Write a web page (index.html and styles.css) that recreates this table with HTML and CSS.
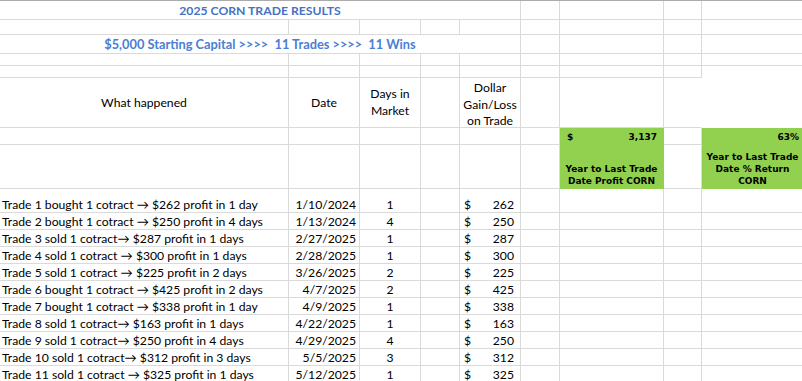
FILE: index.html
```html
<!DOCTYPE html>
<html>
<head>
<meta charset="utf-8">
<link rel="stylesheet" href="styles.css">
</head>
<body>
<div class="sheet">
  <!-- row 1 -->
  <div class="c title span5">2025 CORN TRADE RESULTS</div>
  <div class="c"></div><div class="c"></div><div class="c"></div><div class="c last"></div>
  <!-- row 2 -->
  <div class="c"></div><div class="c"></div><div class="c"></div><div class="c"></div><div class="c"></div><div class="c"></div><div class="c"></div><div class="c"></div><div class="c last"></div>
  <!-- row 3 -->
  <div class="c subtitle span5">$5,000 Starting Capital &gt;&gt;&gt;&gt;  11 Trades &gt;&gt;&gt;&gt;  11 Wins</div>
  <div class="c"></div><div class="c"></div><div class="c"></div><div class="c last"></div>
  <!-- row 4 -->
  <div class="c"></div><div class="c"></div><div class="c"></div><div class="c"></div><div class="c"></div><div class="c"></div><div class="c"></div><div class="c"></div><div class="c last"></div>
  <!-- row 5 -->
  <div class="c"></div><div class="c"></div><div class="c"></div><div class="c"></div><div class="c"></div><div class="c"></div><div class="c"></div><div class="c"></div><div class="c last blank"></div>
  <!-- row 6 header -->
  <div class="c head">What happened</div>
  <div class="c head">Date</div>
  <div class="c head">Days in<br>Market</div>
  <div class="c"></div>
  <div class="c head head3">Dollar<br>Gain/Loss<br>on Trade</div>
  <div class="c"></div>
  <div class="c"></div>
  <div class="c noright"></div>
  <div class="c last blank"></div>
  <!-- row 7 -->
  <div class="c"></div><div class="c"></div><div class="c"></div><div class="c"></div><div class="c"></div><div class="c"></div>
  <div class="c green gval"><span>$</span><span>3,137</span></div>
  <div class="c"></div>
  <div class="c last green gpct">63%</div>
  <!-- row 8 -->
  <div class="c"></div><div class="c"></div><div class="c"></div><div class="c"></div><div class="c"></div><div class="c"></div>
  <div class="c green glabel">Year to Last Trade<br>Date Profit CORN</div>
  <div class="c"></div>
  <div class="c last green glabel">Year to Last Trade<br>Date % Return<br>CORN</div>

  <!-- trades -->
  <div class="c txt">Trade 1 bought 1 cotract → $262 profit in 1 day</div><div class="c date">1/10/2024</div><div class="c days">1</div><div class="c"></div><div class="c money"><span>$</span><span>262</span></div><div class="c"></div><div class="c"></div><div class="c"></div><div class="c last"></div>
  <div class="c txt">Trade 2 bought 1 cotract → $250 profit in 4 days</div><div class="c date">1/13/2024</div><div class="c days">4</div><div class="c"></div><div class="c money"><span>$</span><span>250</span></div><div class="c"></div><div class="c"></div><div class="c"></div><div class="c last"></div>
  <div class="c txt">Trade 3 sold 1 cotract→ $287 profit in 1 days</div><div class="c date">2/27/2025</div><div class="c days">1</div><div class="c"></div><div class="c money"><span>$</span><span>287</span></div><div class="c"></div><div class="c"></div><div class="c"></div><div class="c last"></div>
  <div class="c txt">Trade 4 sold 1 cotract → $300 profit in 1 days</div><div class="c date">2/28/2025</div><div class="c days">1</div><div class="c"></div><div class="c money"><span>$</span><span>300</span></div><div class="c"></div><div class="c"></div><div class="c"></div><div class="c last"></div>
  <div class="c txt">Trade 5 sold 1 cotract → $225 profit in 2 days</div><div class="c date">3/26/2025</div><div class="c days">2</div><div class="c"></div><div class="c money"><span>$</span><span>225</span></div><div class="c"></div><div class="c"></div><div class="c"></div><div class="c last"></div>
  <div class="c txt">Trade 6 bought 1 cotract → $425 profit in 2 days</div><div class="c date">4/7/2025</div><div class="c days">2</div><div class="c"></div><div class="c money"><span>$</span><span>425</span></div><div class="c"></div><div class="c"></div><div class="c"></div><div class="c last"></div>
  <div class="c txt">Trade 7 bought 1 cotract → $338 profit in 1 day</div><div class="c date">4/9/2025</div><div class="c days">1</div><div class="c"></div><div class="c money"><span>$</span><span>338</span></div><div class="c"></div><div class="c"></div><div class="c"></div><div class="c last"></div>
  <div class="c txt">Trade 8 sold 1 cotract→ $163 profit in 1 days</div><div class="c date">4/22/2025</div><div class="c days">1</div><div class="c"></div><div class="c money"><span>$</span><span>163</span></div><div class="c"></div><div class="c"></div><div class="c"></div><div class="c last"></div>
  <div class="c txt">Trade 9 sold 1 cotract→ $250 profit in 4 days</div><div class="c date">4/29/2025</div><div class="c days">4</div><div class="c"></div><div class="c money"><span>$</span><span>250</span></div><div class="c"></div><div class="c"></div><div class="c"></div><div class="c last"></div>
  <div class="c txt">Trade 10 sold 1 cotract→ $312 profit in 3 days</div><div class="c date">5/5/2025</div><div class="c days">3</div><div class="c"></div><div class="c money"><span>$</span><span>312</span></div><div class="c"></div><div class="c"></div><div class="c"></div><div class="c last"></div>
  <div class="c txt">Trade 11 sold 1 cotract → $325 profit in 1 days</div><div class="c date">5/12/2025</div><div class="c days">1</div><div class="c"></div><div class="c money"><span>$</span><span>325</span></div><div class="c"></div><div class="c"></div><div class="c"></div><div class="c last"></div>
</div>
</body>
</html>
```

FILE: styles.css
```css
html, body {
  margin: 0;
  padding: 0;
  background: #ffffff;
}
body {
  font-family: Lato, "Liberation Sans", sans-serif;
  font-size: 12.2px;
  color: #000000;
  overflow: hidden;
}
.sheet {
  display: grid;
  grid-template-columns: 289px 71px 61px 39px 61px 39px 104px 38px 101px;
  grid-template-rows: 19px 15px 19px 12px 12px 50px 17px 44px 24px repeat(11, 17px);
  border-top: 1px solid #ababab;
  width: 802px;
}
.c {
  box-sizing: border-box;
  border-right: 1px solid #dadada;
  border-bottom: 1px solid #dadada;
  display: flex;
  align-items: flex-end;
  line-height: 15px;
  white-space: nowrap;
  min-width: 0;
}
.last {
  border-right: none;
}
.blank {
  border-bottom-color: #ffffff;
}
.noright {
  border-right-color: #ffffff;
}
.span5 {
  grid-column: span 5;
  justify-content: center;
}
.title {
  font-weight: bold;
  font-size: 12.2px;
  color: #4472c4;
  padding-bottom: 1px;
}
.subtitle {
  font-weight: bold;
  font-size: 12.8px;
  color: #4a7ed6;
  white-space: pre;
  padding-bottom: 1px;
}
.head {
  align-items: center;
  justify-content: center;
  text-align: center;
  line-height: 16.6px;
  padding-top: 1px;
}
.head3 {
  align-items: flex-start;
  padding-top: 2px;
}
.txt {
  padding-left: 2px;
}
.date {
  justify-content: flex-end;
  padding-right: 3px;
}
.days {
  justify-content: center;
}
.money {
  justify-content: space-between;
  padding: 0 6px 0 4px;
}
.green {
  background: #92d050;
  border-right-color: #92d050;
  border-bottom-color: #92d050;
  font-family: "DejaVu Sans", sans-serif;
  font-weight: bold;
  font-size: 9px;
}
.gval {
  justify-content: space-between;
  align-items: center;
  padding: 3px 6px 0 7px;
}
.gpct {
  justify-content: flex-end;
  align-items: center;
  padding: 3px 4px 0 0;
}
.glabel {
  justify-content: center;
  text-align: center;
  line-height: 12px;
  white-space: normal;
  padding-bottom: 1px;
}
```
